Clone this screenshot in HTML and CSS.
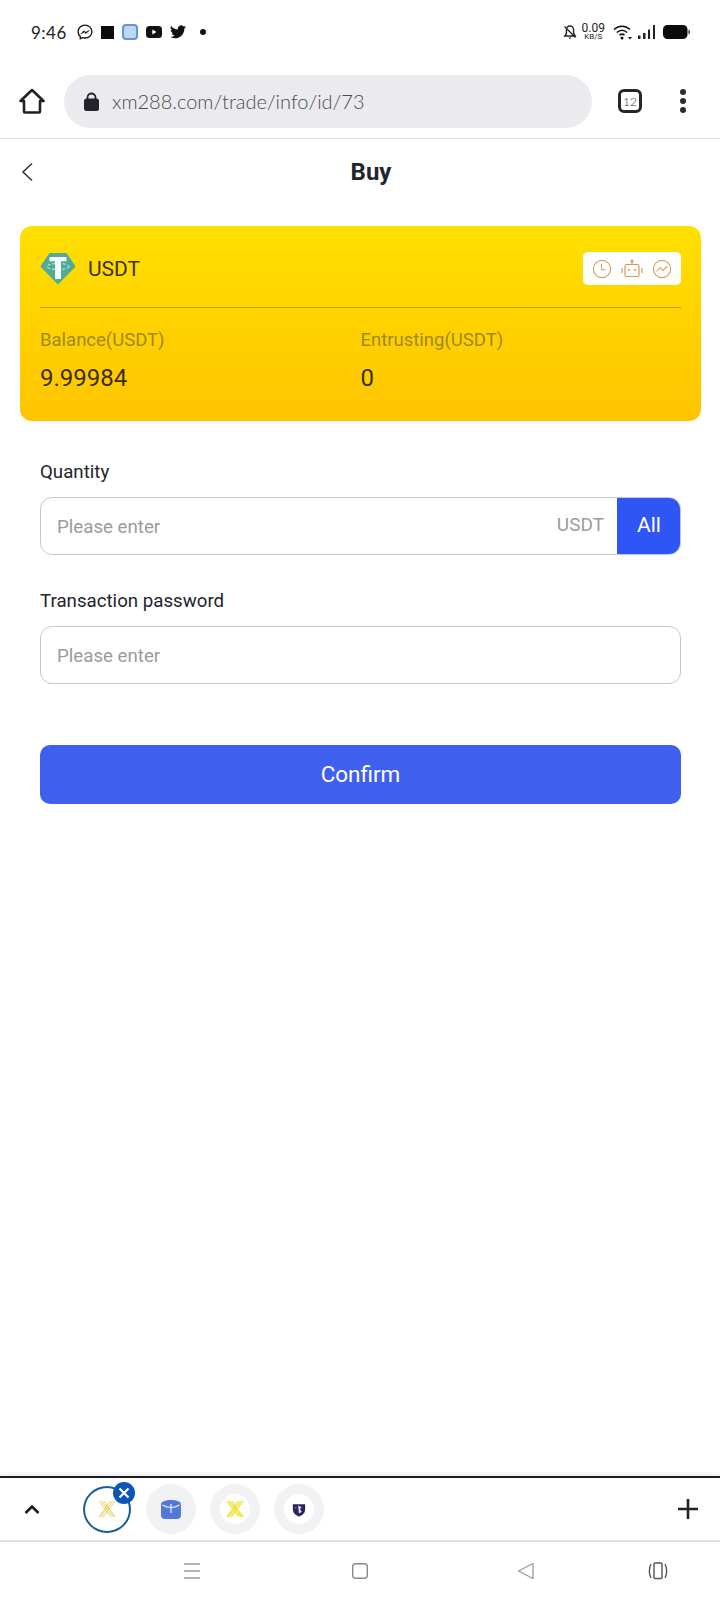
FILE: index.html

```html
<!DOCTYPE html>
<html lang="en">
<head>
  <meta charset="UTF-8" />
  <meta name="viewport" content="width=device-width, initial-scale=1.0"/>
  <title>Buy</title>
  <link rel="stylesheet" href="styles.css">
</head>
<body>
  <div class="statusbar">
    <div class="status-left">
      <span class="time">9:46</span>
      <svg width="16" height="16" viewBox="0 0 16 16"><path d="M8 1.200C4.100 1.200 1.100 4 1.100 7.700c0 2 .8 3.700 2.200 4.900v2.200l2.100-1.100c.8.200 1.700.3 2.600.3 3.900 0 6.900-2.800 6.900-6.300S11.900 1.200 8 1.200z" fill="none" stroke="#111" stroke-width="1.300"/><path d="M3.900 9.800 7 6.700l1.700 1.600 3.300-1.900-3 3.200-1.800-1.600z" fill="#111" stroke="#111" stroke-width=".6"/></svg>
      <span class="sq"></span>
      <span class="app-blue"></span>
      <svg width="16" height="12" viewBox="0 0 16 12"><rect width="16" height="12" rx="3.500" fill="#111"/><path d="M6.300 3.500v5L10.500 6z" fill="#fff"/></svg>
      <svg width="16" height="14" viewBox="0 0 24 20"><path d="M24 2.400c-.9.400-1.800.7-2.800.8 1-.6 1.800-1.600 2.200-2.700-1 .6-2 1-3.100 1.200A4.900 4.900 0 0 0 11.900 6.200 14 14 0 0 1 1.700.9a4.900 4.900 0 0 0 1.500 6.600c-.8 0-1.600-.2-2.200-.6 0 2.400 1.700 4.400 3.900 4.900-.7.200-1.500.2-2.200.1.600 2 2.400 3.400 4.600 3.400A9.900 9.900 0 0 1 0 17.300 14 14 0 0 0 7.500 19.500c9.100 0 14.300-7.700 14-14.600 1-.7 1.800-1.500 2.500-2.500z" fill="#111"/></svg>
      <span class="dot"></span>
    </div>
    <div class="status-right">
      <svg width="14" height="16" viewBox="0 0 14 16"><path d="M7 2c-2.300 0-3.600 1.700-3.600 4v3.500L1.800 12h10.400l-1.600-2.500V6C10.600 3.700 9.300 2 7 2z" fill="none" stroke="#222" stroke-width="1.400"/><path d="M5.500 13.500h3L7 15.200z" fill="#222"/><path d="M1.500 2.500l11 11" stroke="#222" stroke-width="1.300"/></svg>
      <div class="speed"><span>0.09</span><span class="speed-unit">KB/S</span></div>
      <svg class="wifi" width="20" height="16" viewBox="0 0 20 16"><g fill="none" stroke="#111" stroke-width="1.600"><path d="M1 5.500c4.800-4.300 11.200-4.300 16 0"/><path d="M3.800 8.500c3.200-2.800 7.200-2.800 10.400 0"/><path d="M6.500 11.200c1.600-1.300 3.400-1.300 5 0"/></g><circle cx="9" cy="14" r="1.500" fill="#111"/><path d="M15 13h4l-2 2.500z" fill="#111"/></svg>
      <svg width="18" height="16" viewBox="0 0 18 16"><g fill="#222"><rect x="0" y="11.500" width="2.500" height="3.500"/><rect x="5" y="9" width="2.500" height="6"/><rect x="10" y="5.500" width="2" height="9.500"/><rect x="15" y="1" width="2" height="14"/></g></svg>
      <svg width="27" height="14" viewBox="0 0 27 14"><rect width="24.500" height="14" rx="4.500" fill="#0a0a0a"/><path d="M25.500 4.500c1 .4 1.500 1.300 1.500 2.500s-.5 2.100-1.500 2.500z" fill="#333"/></svg>
    </div>
  </div>

  <div class="browserbar">
    <svg class="home" width="26" height="26" viewBox="0 0 26 26"><path d="M1.500 13 13 2l11.500 11H21v10.500a1 1 0 0 1-1 1H6a1 1 0 0 1-1-1V13z" fill="none" stroke="#222" stroke-width="2.600" stroke-linejoin="round"/></svg>
    <div class="urlbox">
      <svg width="15" height="19" viewBox="0 0 15 19"><path d="M3.500 8V5.500a4 4 0 0 1 8 0V8" fill="none" stroke="#23232b" stroke-width="1.800"/><rect y="6.500" width="15" height="12.500" rx="2.500" fill="#23232b"/></svg>
      <span class="url">xm288.com/trade/info/id/73</span>
    </div>
    <div class="tabcount">12</div>
    <div class="menu-dots"><span></span><span></span><span></span></div>
  </div>

  <main class="page">
    <div class="titlebar">
      <svg class="back" width="12" height="20" viewBox="0 0 12 20"><path d="M11 1.500 2 10l9 8.500" fill="none" stroke="#333" stroke-width="1.500"/></svg>
      <h1>Buy</h1>
    </div>

    <section class="card">
      <div class="card-head">
        <div class="coin">
          <svg width="36" height="33" viewBox="0 0 36 33"><path d="M9.500 1h17l8.500 12.500a1.500 1.500 0 0 1-.2 1.900L18 32.500 1.200 15.400a1.500 1.500 0 0 1-.2-1.900z" fill="#52ab98"/><ellipse cx="18" cy="14.500" rx="11" ry="3" fill="none" stroke="#d8f0e8" stroke-width="1" stroke-dasharray="3 2"/><path d="M9.500 5h17v4.300H21V27h-6V9.300H9.500z" fill="#f4fbf8"/></svg>
          <span>USDT</span>
        </div>
        <div class="tools">
          <svg width="20" height="20" viewBox="0 0 20 20"><g fill="none" stroke="#d8a060" stroke-width="1.100"><circle cx="10" cy="10" r="8.600"/><path d="M9.500 4.800v5.900h4.300"/></g></svg>
          <svg width="22" height="20" viewBox="0 0 22 20"><g fill="none" stroke="#d89858" stroke-width="1.200"><rect x="4" y="5.500" width="14" height="12" rx="1.500"/><path d="M1 9v5M21 9v5M11 2v3.500"/></g><circle cx="11" cy="2" r="1.600" fill="#d89858"/><circle cx="8" cy="11" r="1.100" fill="#d89858"/><circle cx="14" cy="11" r="1.100" fill="#d89858"/></svg>
          <svg width="20" height="20" viewBox="0 0 20 20"><g fill="none" stroke="#d8a060" stroke-width="1.100"><circle cx="10" cy="10" r="8.600"/><path d="M4.500 12.500 8 8.500l3 3 4.500-4.500"/></g></svg>
        </div>
      </div>
      <div class="stats">
        <div>
          <div class="stat-label">Balance(USDT)</div>
          <div class="stat-value">9.99984</div>
        </div>
        <div>
          <div class="stat-label">Entrusting(USDT)</div>
          <div class="stat-value">0</div>
        </div>
      </div>
    </section>

    <form class="form">
      <label class="field-label first">Quantity</label>
      <div class="field">
        <input type="text" placeholder="Please enter">
        <span class="unit">USDT</span>
        <button type="button" class="all">All</button>
      </div>
      <label class="field-label">Transaction password</label>
      <div class="field">
        <input type="password" placeholder="Please enter">
      </div>
      <button type="button" class="confirm">Confirm</button>
    </form>
  </main>

  <div class="tabbar">
    <svg class="collapse" width="64" height="12" viewBox="0 0 64 12"><path d="M25.500 10 32 3.500l6.500 6.500" fill="none" stroke="#1a1a1a" stroke-width="2.600"/></svg>
    <div class="tab tab-active">
      <svg width="18" height="18" viewBox="0 0 18 18"><g fill="none" stroke="#e6cf5a" stroke-width="1"><path d="M1 1l12 16M3.500 1l12 16M6 1l11 16"/><path d="M17 1 5 17M14.500 1l-12 16M12 1 1 17"/></g></svg>
      <span class="tab-close"><svg width="12" height="12" viewBox="0 0 12 12"><path d="M1.500 1.500l9 9M10.500 1.500l-9 9" stroke="#fff" stroke-width="2.200"/></svg></span>
    </div>
    <div class="tab">
      <svg width="20" height="19" viewBox="0 0 20 19"><path d="M0 4.500C0 1.500 4.500 0 10 0s10 1.500 10 4.500V15a4 4 0 0 1-4 4H4a4 4 0 0 1-4-4z" fill="#5478d8"/><path d="M1.500 5c3 2 5.500 2.500 8.500 2.500S15.500 7 18.500 5M10 4v9" fill="none" stroke="#e8eefc" stroke-width="1.200"/></svg>
    </div>
    <div class="tab">
      <span class="halo">
        <svg width="18" height="18" viewBox="0 0 18 18"><g fill="none" stroke="#f0e440" stroke-width="1.300"><path d="M1 1l12 16M3.500 1l12 16M6 1l11 16"/><path d="M17 1 5 17M14.500 1l-12 16M12 1 1 17"/></g></svg>
      </span>
    </div>
    <div class="tab">
      <span class="halo">
        <svg width="14" height="15" viewBox="0 0 16 16"><path d="M1 2h14v6c0 4-3 6.500-7 8-4-1.500-7-4-7-8z" fill="#2a2660"/><path d="M7 3.500l4 2-2 2 2 3-3 2z" fill="#f4eaf2"/><circle cx="4" cy="6" r="1.200" fill="#c03a5a"/></svg>
      </span>
    </div>
    <svg class="add" width="20" height="20" viewBox="0 0 20 20"><path d="M0 10h20M10 0v20" stroke="#222" stroke-width="2.600"/></svg>
  </div>

  <nav class="navbar">
    <svg width="20" height="18" viewBox="0 0 20 18"><path d="M2 2h16M2 9h16M2 16h16" stroke="#9a9a9a" stroke-width="1.500"/></svg>
    <svg class="nav-home" width="20" height="18" viewBox="0 0 20 18"><rect x="2.700" y="1.700" width="14.600" height="14.600" rx="3" fill="none" stroke="#8a8a8a" stroke-width="1.400"/></svg>
    <svg class="nav-back" width="20" height="18" viewBox="0 0 20 18"><path d="M17 1.500v15L2.500 9z" fill="none" stroke="#9a9a9a" stroke-width="1.300" stroke-linejoin="round"/></svg>
    <svg class="nav-rotate" width="20" height="18" viewBox="0 0 20 18"><rect x="6" y="1" width="8" height="15.500" rx="1" fill="none" stroke="#555" stroke-width="1.400"/><path d="M3 2C.8 6 .8 12 3 16M17 2c2.200 4 2.200 10 0 14" fill="none" stroke="#555" stroke-width="1.400"/></svg>
  </nav>
</body>
</html>
```

FILE: styles.css

```css
* {
  box-sizing: border-box;
}
body {
  margin: 0;
  height: 1600px;
  display: flex;
  flex-direction: column;
  background: #fff;
  color: #24242c;
  font-family: Roboto, "Liberation Sans", sans-serif;
}
svg {
  display: block;
  flex-shrink: 0;
}

/* status bar */
.statusbar {
  height: 64px;
  display: flex;
  align-items: center;
  justify-content: space-between;
  padding: 0 30px 0 31px;
}
.status-left, .status-right {
  display: flex;
  align-items: center;
  gap: 8px;
}
.time {
  font-family: Lato, sans-serif;
  font-size: 17px;
  letter-spacing: 0.5px;
  color: #222;
  margin-right: 2px;
}
.sq {
  width: 13px;
  height: 13px;
  background: #0a0a0a;
}
.app-blue {
  width: 16px;
  height: 16px;
  border-radius: 4px;
  background: #bcd6f4;
  border: 2.500px solid #5f96d0;
}
.dot {
  width: 6px;
  height: 6px;
  border-radius: 50%;
  background: #111;
  margin-left: 6px;
}
.status-right {
  gap: 7px;
}
.speed {
  display: flex;
  flex-direction: column;
  align-items: center;
  margin-left: -2px;
  font-size: 12px;
  line-height: 9px;
  color: #222;
}
.speed-unit {
  font-size: 8px;
  line-height: 8px;
}
.wifi {
  margin: 0 -2px 0 1px;
}

/* browser bar */
.browserbar {
  height: 75px;
  display: flex;
  align-items: center;
  padding-left: 19px;
  border-bottom: 1.500px solid #e2e2e2;
}
.urlbox {
  width: 528px;
  height: 53px;
  margin-left: 19px;
  padding-left: 20px;
  display: flex;
  align-items: center;
  gap: 13px;
  border-radius: 27px;
  background: #ebebef;
}
.url {
  font-family: Lato, sans-serif;
  font-weight: 300;
  font-size: 20px;
  color: #4a4a50;
}
.tabcount {
  width: 24px;
  height: 24px;
  margin-left: 26px;
  border: 3px solid #26262c;
  border-radius: 6px;
  display: flex;
  align-items: center;
  justify-content: center;
  font-family: Lato, sans-serif;
  font-weight: 300;
  font-size: 12px;
  color: #333;
}
.menu-dots {
  margin-left: 38px;
  display: flex;
  flex-direction: column;
  gap: 3px;
}
.menu-dots span {
  width: 6px;
  height: 6px;
  border-radius: 50%;
  background: #2a2a30;
}

/* page */
.page {
  flex: 1;
}
.titlebar {
  height: 66px;
  padding-left: 22px;
  display: flex;
  align-items: center;
  justify-content: center;
  position: relative;
}
.titlebar h1 {
  margin: 0;
  font-size: 24px;
  font-weight: 700;
  color: #24242c;
}
.back {
  position: absolute;
  left: 21px;
  top: 23px;
}
.card {
  margin: 21px 19px 0 20px;
  height: 195px;
  padding: 0 20px;
  border-radius: 12px;
  background: linear-gradient(180deg, #ffe000 0%, #ffc400 100%);
}
.card-head {
  height: 82px;
  padding-top: 4px;
  display: flex;
  align-items: center;
  justify-content: space-between;
  border-bottom: 1px solid #b59a1c;
}
.coin {
  display: flex;
  align-items: center;
  gap: 12px;
  font-size: 21px;
  color: #3a3420;
}
.tools {
  width: 98px;
  height: 33px;
  display: flex;
  align-items: center;
  justify-content: center;
  gap: 9px;
  background: #fff;
  border-radius: 5px;
}
.stats {
  display: grid;
  grid-template-columns: 1fr 1fr;
  padding-top: 21px;
}
.stat-label {
  font-size: 18.500px;
  line-height: 22px;
  color: #9c8a1e;
}
.stat-value {
  margin-top: 13px;
  font-size: 24px;
  line-height: 28px;
  color: #3a3016;
}

/* form */
.form {
  padding: 0 39px 0 40px;
}
.field-label {
  display: block;
  margin-top: 34px;
  font-size: 18.700px;
  line-height: 24px;
  color: #24242c;
}
.field-label.first {
  margin-top: 39px;
}
.field {
  height: 58px;
  margin-top: 13px;
  display: flex;
  align-items: stretch;
  border: 1px solid #c8c8cc;
  border-radius: 12px;
  overflow: hidden;
}
.field input {
  flex: 1;
  min-width: 0;
  border: 0;
  outline: 0;
  padding: 1px 0 0 16px;
  font: 18.700px Roboto, sans-serif;
  background: transparent;
}
.field input::placeholder {
  color: #9b9b9f;
}
.unit {
  align-self: center;
  margin: 0 14px 3px 0;
  font-size: 19px;
  color: #9b9b9f;
}
.all {
  width: 64px;
  margin: -1px;
  border: 0;
  background: #2f55f5;
  color: #fff;
  font: 21px Roboto, sans-serif;
  padding-bottom: 4px;
}
.confirm {
  display: block;
  width: 100%;
  height: 59px;
  margin-top: 61px;
  padding-bottom: 3px;
  border: 0;
  border-radius: 10px;
  background: #3f60ef;
  color: #fff;
  font: 22.500px Roboto, sans-serif;
}

/* tabs along the bottom */
.tabbar {
  height: 66px;
  display: flex;
  align-items: center;
  gap: 14px;
  padding-right: 22px;
  border-top: 2px solid #1d1d1f;
  border-bottom: 2px solid #e0e0e0;
  box-shadow: 0 -3px 3px #f0f0f0;
}
.collapse {
  margin-right: 4px;
}
.tab {
  width: 50px;
  height: 50px;
  border-radius: 50%;
  background: #f1f2f4;
  display: flex;
  align-items: center;
  justify-content: center;
  position: relative;
}
.tab-active {
  width: 48px;
  height: 47px;
  margin: 0 1px;
  background: #fff;
  border: 2.500px solid #1f5c98;
}
.tab-close {
  position: absolute;
  top: -6px;
  right: -6px;
  width: 22px;
  height: 22px;
  border-radius: 50%;
  background: #0d56b8;
  display: flex;
  align-items: center;
  justify-content: center;
}
.halo {
  width: 30px;
  height: 30px;
  border-radius: 50%;
  background: #fff;
  display: flex;
  align-items: center;
  justify-content: center;
}
.add {
  margin-left: auto;
}

/* system nav */
.navbar {
  height: 58px;
  display: flex;
  align-items: center;
  padding-left: 182px;
}
.nav-home {
  margin-left: 148px;
}
.nav-back {
  margin-left: 146px;
}
.nav-rotate {
  margin-left: 112px;
}
```
